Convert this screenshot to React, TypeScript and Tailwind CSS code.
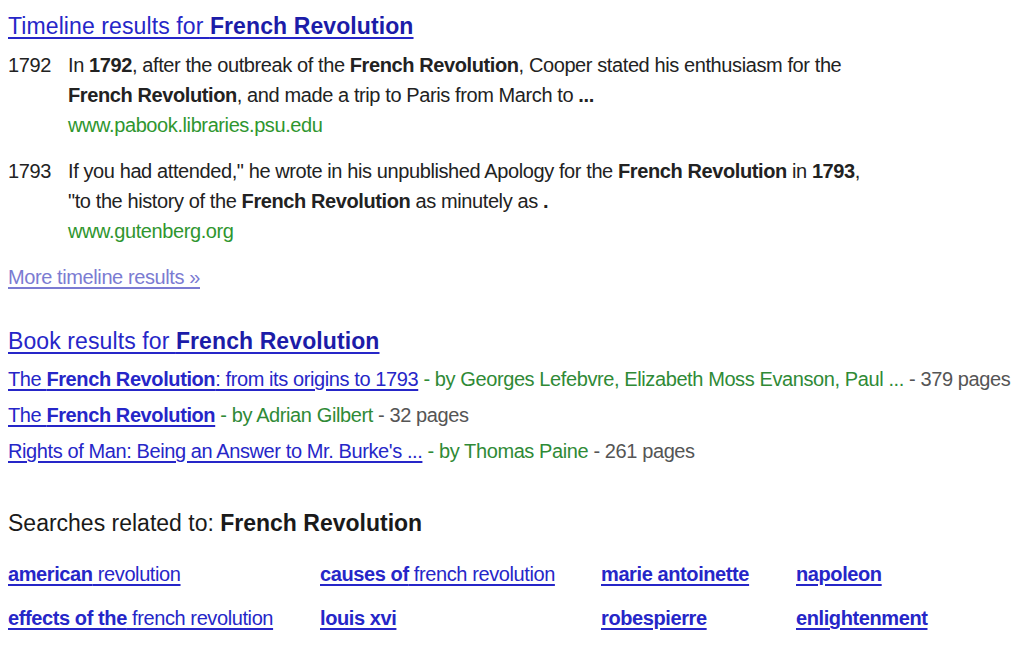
import React from 'react';

type Part = { t: string; b?: boolean };

const timeline: { year: string; lines: Part[][]; url: string }[] = [
  {
    year: '1792',
    lines: [
      [
        { t: 'In ' },
        { t: '1792', b: true },
        { t: ', after the outbreak of the ' },
        { t: 'French Revolution', b: true },
        { t: ', Cooper stated his enthusiasm for the' },
      ],
      [
        { t: 'French Revolution', b: true },
        { t: ', and made a trip to Paris from March to ' },
        { t: '...', b: true },
      ],
    ],
    url: 'www.pabook.libraries.psu.edu',
  },
  {
    year: '1793',
    lines: [
      [
        { t: 'If you had attended," he wrote in his unpublished Apology for the ' },
        { t: 'French Revolution', b: true },
        { t: ' in ' },
        { t: '1793', b: true },
        { t: ',' },
      ],
      [
        { t: '"to the history of the ' },
        { t: 'French Revolution', b: true },
        { t: ' as minutely as ' },
        { t: '.', b: true },
      ],
    ],
    url: 'www.gutenberg.org',
  },
];

const books: { title: Part[]; by: string; pages: string }[] = [
  {
    title: [{ t: 'The ' }, { t: 'French Revolution', b: true }, { t: ': from its origins to 1793' }],
    by: 'by Georges Lefebvre, Elizabeth Moss Evanson, Paul ...',
    pages: '379 pages',
  },
  {
    title: [{ t: 'The ' }, { t: 'French Revolution', b: true }],
    by: 'by Adrian Gilbert',
    pages: '32 pages',
  },
  {
    title: [{ t: "Rights of Man: Being an Answer to Mr. Burke's ..." }],
    by: 'by Thomas Paine',
    pages: '261 pages',
  },
];

const related: Part[][] = [
  [{ t: 'american', b: true }, { t: ' revolution' }],
  [{ t: 'causes of', b: true }, { t: ' french revolution' }],
  [{ t: 'marie antoinette', b: true }],
  [{ t: 'napoleon', b: true }],
  [{ t: 'effects of the', b: true }, { t: ' french revolution' }],
  [{ t: 'louis xvi', b: true }],
  [{ t: 'robespierre', b: true }],
  [{ t: 'enlightenment', b: true }],
];

const Text = ({ parts }: { parts: Part[] }) => (
  <>
    {parts.map((p, i) =>
      p.b ? (
        <b key={i} className="font-bold">
          {p.t}
        </b>
      ) : (
        <span key={i}>{p.t}</span>
      )
    )}
  </>
);

export default function App() {
  return (
    <div className="w-[1024px] h-[658px] overflow-hidden bg-white px-2 pt-[10px] font-['Liberation_Sans',Arial,sans-serif] text-[#222]">
      {/* Timeline section */}
      <h3 className="text-[23px] leading-[32px] tracking-[0.1px] text-[#2626c8] underline decoration-[1.5px] underline-offset-[3px]">
        Timeline results for <b className="font-bold text-[#1c1ca8]">French Revolution</b>
      </h3>
      <div className="mt-[8px] flex flex-col gap-[16px] text-[20px] leading-[30px] tracking-[-0.4px]">
        {timeline.map((item) => (
          <div key={item.year} className="flex">
            <div className="w-[60px] shrink-0">{item.year}</div>
            <div>
              {item.lines.map((ln, i) => (
                <div key={i}>
                  <Text parts={ln} />
                </div>
              ))}
              <div className="text-[#2f962f]">{item.url}</div>
            </div>
          </div>
        ))}
      </div>
      <div className="mt-[16px] text-[20px] leading-[30px] tracking-[-0.4px] text-[#7b7bd2] underline underline-offset-[3px]">
        More timeline results »
      </div>

      {/* Book results */}
      <h3 className="mt-[33px] text-[23px] leading-[32px] tracking-[0.1px] text-[#2626c8] underline decoration-[1.5px] underline-offset-[3px]">
        Book results for <b className="font-bold text-[#1c1ca8]">French Revolution</b>
      </h3>
      <div className="mt-[7px] flex flex-col gap-[6px] text-[20px] leading-[30px] tracking-[-0.4px]">
        {books.map((bk, i) => (
          <div key={i} className="whitespace-nowrap">
            <span className="text-[#2626c8] underline underline-offset-[3px]">
              <Text parts={bk.title} />
            </span>
            <span className="text-[#2f8a36]"> - {bk.by}</span>
            <span className="text-[#555]"> - {bk.pages}</span>
          </div>
        ))}
      </div>

      {/* Related searches */}
      <h3 className="mt-[41px] text-[23px] leading-[32px] text-[#1a1a1a]">
        Searches related to: <b className="font-bold">French Revolution</b>
      </h3>
      <div className="mt-[20px] grid grid-cols-[312px_281px_195px_auto] gap-y-[14px] text-[20px] leading-[30px] tracking-[-0.4px]">
        {related.map((r, i) => (
          <div key={i}>
            <span className="text-[#2626c8] underline underline-offset-[3px]">
              <Text parts={r} />
            </span>
          </div>
        ))}
      </div>
    </div>
  );
}
